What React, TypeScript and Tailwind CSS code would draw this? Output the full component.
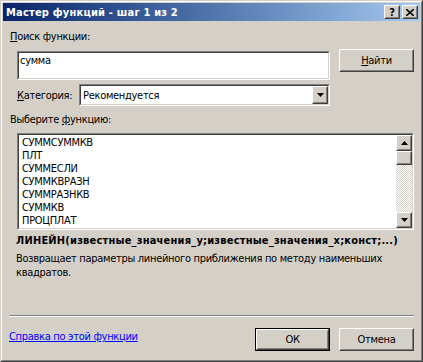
import React from "react";

const raised =
  "border border-t-white border-l-white border-r-[#404040] border-b-[#404040]";
const raisedInner =
  "border border-t-[#d4d0c8] border-l-[#d4d0c8] border-r-[#808080] border-b-[#808080]";
const sunken =
  "border border-t-[#808080] border-l-[#808080] border-r-white border-b-white";
const sunkenInner =
  "border border-t-[#404040] border-l-[#404040] border-r-[#d4d0c8] border-b-[#d4d0c8]";

function Btn({ children, w = "w-[75px]", h = "h-[23px]", className = "" }: { children: React.ReactNode; w?: string; h?: string; className?: string }) {
  return (
    <div className={`${raised} ${w} ${h} bg-[#d4d0c8] ${className}`}>
      <div className={`${raisedInner} w-full h-full flex items-center justify-center`}>{children}</div>
    </div>
  );
}

function Tri({ dir }: { dir: "up" | "down" }) {
  return (
    <svg width="7" height="4" viewBox="0 0 7 4" className="block">
      {dir === "down" ? <path d="M0 0H7L3.5 4Z" fill="#000" /> : <path d="M0 4H7L3.5 0Z" fill="#000" />}
    </svg>
  );
}

function SmallBtn({ children, className = "" }: { children: React.ReactNode; className?: string }) {
  return (
    <div className={`${raised} bg-[#d4d0c8] ${className}`}>
      <div className={`${raisedInner} w-full h-full flex items-center justify-center`}>{children}</div>
    </div>
  );
}

const items = ["СУММСУММКВ", "ПЛТ", "СУММЕСЛИ", "СУММКВРАЗН", "СУММРАЗНКВ", "СУММКВ", "ПРОЦПЛАТ"];

export default function App() {
  return (
    <div className="w-[423px] h-[362px] bg-[#d4d0c8] border border-t-[#d4d0c8] border-l-[#d4d0c8] border-r-[#404040] border-b-[#404040] text-[11px] leading-[13px] tracking-[-0.3px] text-black [font-family:'DejaVu_Sans_Condensed','Liberation_Sans',sans-serif]">
      <div className="h-full border border-t-white border-l-white border-r-[#808080] border-b-[#808080] p-px flex flex-col">
        {/* title bar */}
        <div className="h-[18px] flex items-center bg-gradient-to-r from-[#0a246a] to-[#a6caf0] pl-[3px] pr-[2px]">
          <div className="flex-1 text-white font-bold tracking-[0.2px]">Мастер функций - шаг 1 из 2</div>
          <SmallBtn className="w-[16px] h-[14px]">
            <span className="font-bold text-[11px] leading-none tracking-normal">?</span>
          </SmallBtn>
          <SmallBtn className="w-[16px] h-[14px] ml-[2px]">
            <svg width="8" height="7" viewBox="0 0 8 7" className="block">
              <path d="M0 0L8 7M8 0L0 7" stroke="#000" strokeWidth="1.6" />
            </svg>
          </SmallBtn>
        </div>

        {/* content */}
        <div className="flex flex-col pr-[6px]">
          <div className="ml-[7px] mt-[9px]">
            <span className="underline">П</span>оиск функции:
          </div>

          <div className="flex items-start mt-[6px] ml-[14px]">
            <div className={`${sunken} w-[313px] h-[29px] mt-[2px] bg-white`}>
              <div className={`${sunkenInner} w-full h-full bg-white pl-[1px] pt-[1px]`}>сумма</div>
            </div>
            <Btn className="ml-[9px]">
              <span>
                <span className="underline">Н</span>айти
              </span>
            </Btn>
          </div>

          <div className="flex items-center mt-[4px] ml-[14px]">
            <div className="w-[62px]">
              <span className="underline">К</span>атегория:
            </div>
            <div className={`${sunken} w-[251px] h-[22px] bg-white`}>
              <div className={`${sunkenInner} w-full h-full bg-white flex items-center`}>
                <div className="flex-1 pl-[2px]">Рекомендуется</div>
                <SmallBtn className="w-[16px] h-[18px]">
                  <Tri dir="down" />
                </SmallBtn>
              </div>
            </div>
          </div>

          <div className="ml-[7px] mt-[7px]">
            Выберите <span className="underline">ф</span>ункцию:
          </div>

          <div className={`${sunken} ml-[14px] mt-[7px] w-[397px] h-[97px] bg-white`}>
            <div className={`${sunkenInner} w-full h-full bg-white flex`}>
              <div className="flex-1 flex flex-col pl-[3px] pt-[1px]">
                {items.map((it) => (
                  <div key={it} className="h-[13px]">
                    {it}
                  </div>
                ))}
              </div>
              <div className="w-[16px] flex flex-col">
                <SmallBtn className="w-[16px] h-[16px]">
                  <Tri dir="up" />
                </SmallBtn>
                <SmallBtn className="w-[16px] h-[14px]">
                  <span />
                </SmallBtn>
                <div className="flex-1 bg-[repeating-conic-gradient(#d4d0c8_0_25%,#ffffff_0_50%)] bg-[length:2px_2px]" />
                <SmallBtn className="w-[16px] h-[16px]">
                  <Tri dir="down" />
                </SmallBtn>
              </div>
            </div>
          </div>

          <div className="ml-[13px] mt-[4px] font-bold tracking-[0.2px] whitespace-nowrap">
            ЛИНЕЙН(известные_значения_у;известные_значения_х;конст;...)
          </div>
          <div className="ml-[13px] mt-[5px] leading-[14px] w-[390px]">
            Возвращает параметры линейного приближения по методу наименьших квадратов.
          </div>

          <div className="ml-[6px] mt-[35px] h-[2px] border-t border-t-[#808080] border-b border-b-white" />

          <div className="flex items-start mt-[11px] ml-[6px]">
            <div className="flex-1 mt-[2px] text-[#0000ff] underline">Справка по этой функции</div>
            <div className="border border-black w-[75px] h-[23px]">
              <div className={`${raised} w-full h-full`}>
                <div className={`${raisedInner} w-full h-full flex items-center justify-center`}>ОК</div>
              </div>
            </div>
            <Btn className="ml-[9px]">Отмена</Btn>
          </div>
        </div>
      </div>
    </div>
  );
}
